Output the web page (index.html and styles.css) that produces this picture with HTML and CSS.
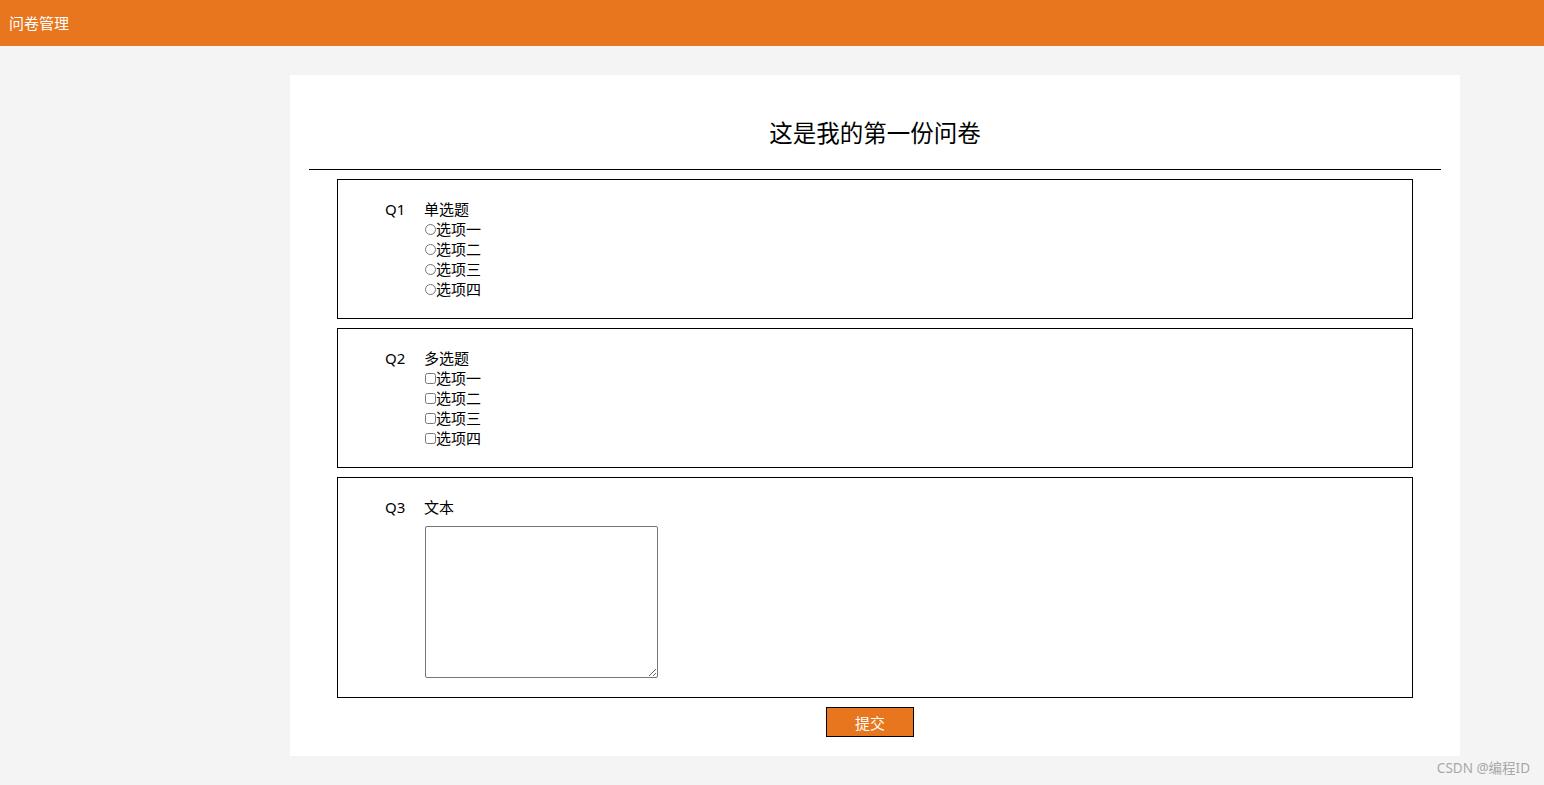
FILE: index.html
```html
<!DOCTYPE html>
<html lang="zh">
<head>
<meta charset="utf-8">
<title>问卷管理</title>
<link rel="stylesheet" href="styles.css">
</head>
<body>
<header class="topbar">问卷管理</header>
<main class="layout">
  <aside class="side"></aside>
  <section class="card">
    <h1 class="title">这是我的第一份问卷</h1>
    <hr class="divider">
    <div class="question">
      <div class="qno">Q1</div>
      <div class="qbody">
        <div class="qlabel">单选题</div>
        <label class="opt"><input type="radio" name="q1" class="radio">选项一</label>
        <label class="opt"><input type="radio" name="q1" class="radio">选项二</label>
        <label class="opt"><input type="radio" name="q1" class="radio">选项三</label>
        <label class="opt"><input type="radio" name="q1" class="radio">选项四</label>
      </div>
    </div>
    <div class="question">
      <div class="qno">Q2</div>
      <div class="qbody">
        <div class="qlabel">多选题</div>
        <label class="opt"><input type="checkbox" class="check">选项一</label>
        <label class="opt"><input type="checkbox" class="check">选项二</label>
        <label class="opt"><input type="checkbox" class="check">选项三</label>
        <label class="opt"><input type="checkbox" class="check">选项四</label>
      </div>
    </div>
    <div class="question">
      <div class="qno">Q3</div>
      <div class="qbody">
        <div class="qlabel">文本</div>
        <textarea class="answer"></textarea>
      </div>
    </div>
    <div class="actions">
      <button class="submit" type="button">提交</button>
    </div>
  </section>
</main>
<div class="watermark">CSDN @编程ID</div>
</body>
</html>
```

FILE: styles.css
```css
* { box-sizing: border-box; }
html, body {
  margin: 0;
  padding: 0;
}
body {
  background: #f4f4f4;
  font-family: "Noto Sans", "Noto Sans CJK SC", sans-serif;
  color: #000;
  height: 785px;
  overflow: hidden;
  position: relative;
}
.topbar {
  height: 46px;
  background: #e8761f;
  color: #fff;
  font-size: 15px;
  line-height: 46px;
  padding-left: 9px;
}
.layout {
  display: flex;
  padding-top: 29px;
}
.side {
  width: 290px;
  flex: none;
}
.card {
  width: 1170px;
  height: 681px;
  background: #fff;
  padding: 42px 19px 0;
}
.title {
  margin: 0;
  font-size: 23.5px;
  font-weight: normal;
  line-height: 32px;
  text-align: center;
}
.divider {
  margin: 20px 0 9px;
  border: 0;
  border-top: 1px solid #000;
  height: 0;
}
.question {
  margin: 0 28px 9px;
  border: 1px solid #000;
  padding: 19px 0 19px 47px;
  display: flex;
  font-size: 15px;
  line-height: 20px;
}
.qno {
  width: 39px;
  flex: none;
}
.qbody {
  display: flex;
  flex-direction: column;
  align-items: flex-start;
}
.opt {
  display: flex;
  align-items: center;
  height: 20px;
}
.radio, .check {
  margin: 0 0 0 1px;
  width: 11px;
  height: 11px;
}
.answer {
  display: block;
  margin: 9px 0 0 1px;
  width: 233px;
  height: 152px;
  border: 1px solid #767676;
  border-radius: 2px;
}
.actions {
  display: flex;
  justify-content: center;
  padding-right: 10px;
}
.submit {
  width: 88px;
  height: 30px;
  background: #e8761f;
  border: 1px solid #000;
  color: #fff;
  font-family: "Noto Sans", "Noto Sans CJK SC", sans-serif;
  font-size: 15px;
  padding: 0;
}
.watermark {
  position: absolute;
  right: 14px;
  bottom: 8px;
  font-size: 13.5px;
  color: #a8a8a8;
  line-height: 17px;
}
```
